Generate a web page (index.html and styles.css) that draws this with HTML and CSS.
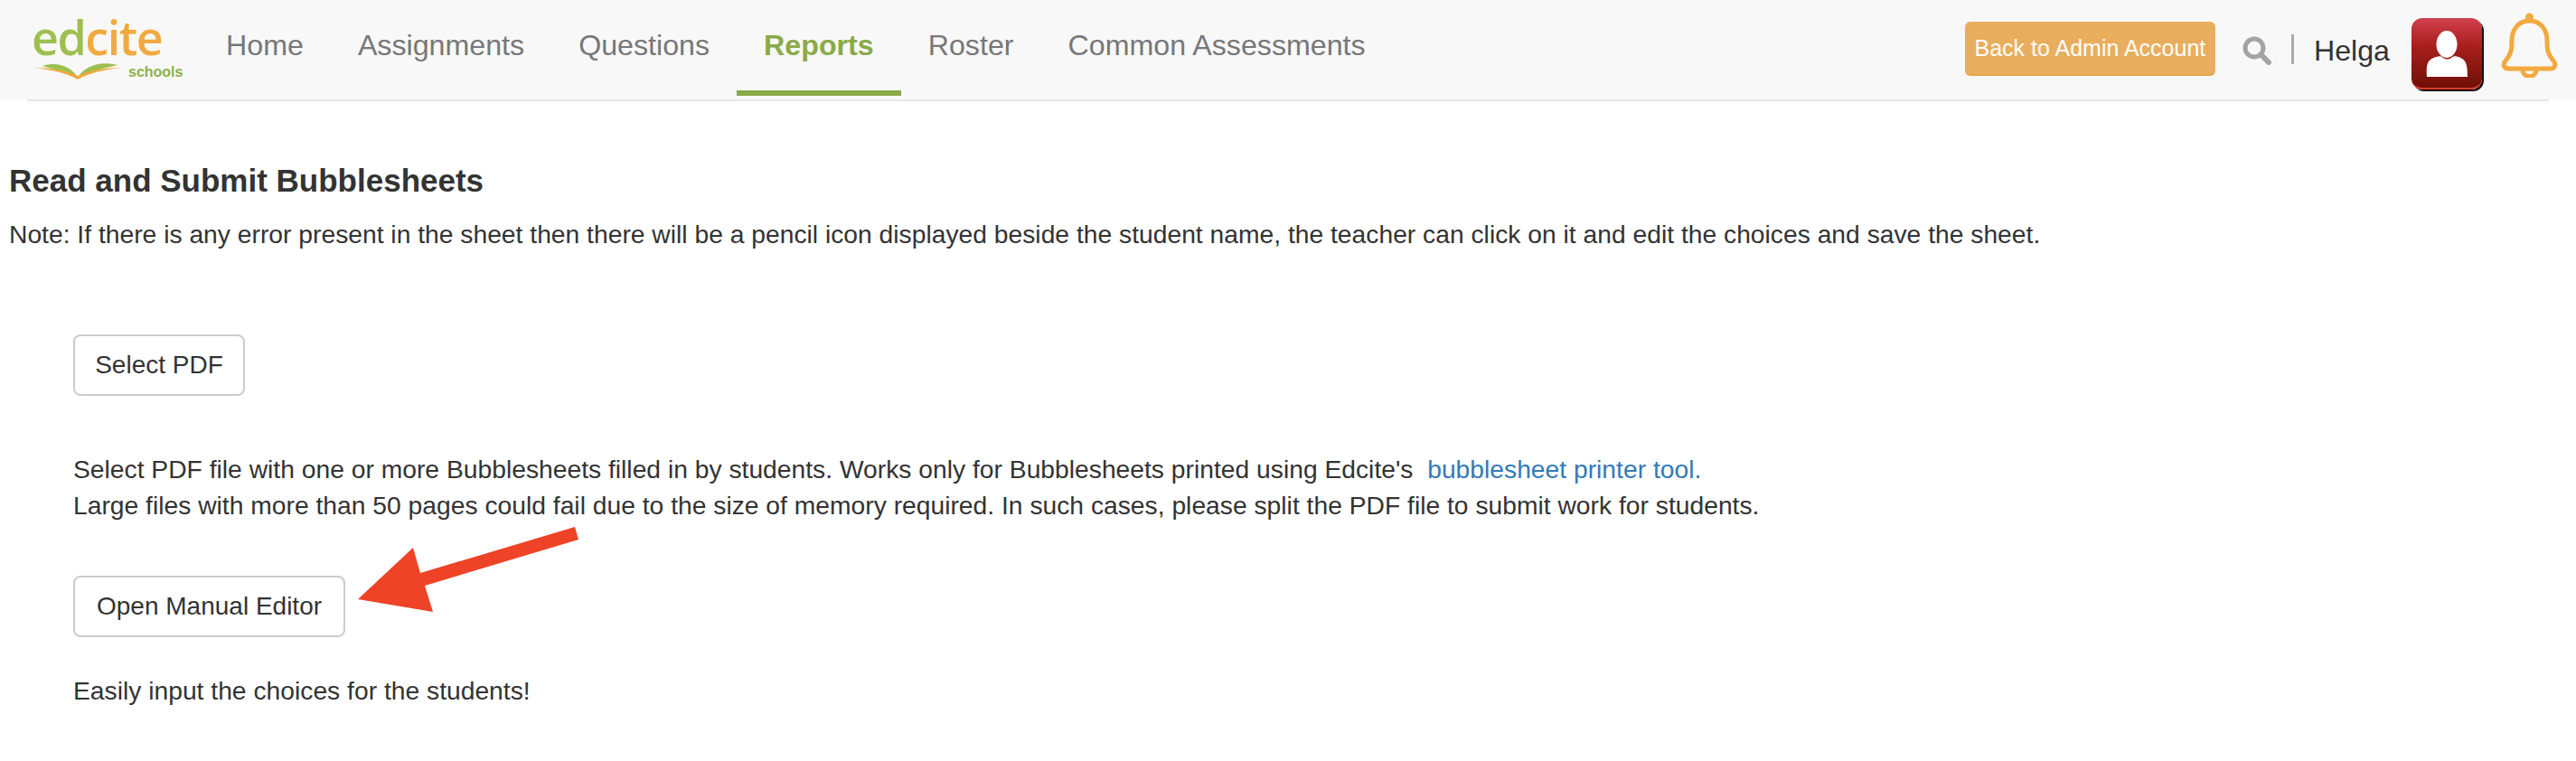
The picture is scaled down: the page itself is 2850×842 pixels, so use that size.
FILE: index.html
```html
<!DOCTYPE html>
<html lang="en">
<head>
    <meta charset="UTF-8">
    <title>Read and Submit Bubblesheets</title>
    <link rel="stylesheet" href="styles.css">
</head>
<body>
    <header class="navbar">
        <a class="logo" href="#">
            <span class="logo-word"><span class="logo-green">ed</span><span class="logo-orange">cite</span></span>
            <svg class="logo-book" viewBox="0 0 98 18" aria-hidden="true">
                <path d="M10 3 C26 -2 40 3 48 14 C38 11 24 7 10 3Z" fill="#9dbf50"/>
                <path d="M93 2 C74 -3 58 3 50 14 C60 10 76 6 93 2Z" fill="#9dbf50"/>
                <path d="M0 5 C18 7 36 10 49 18 C62 10 80 7 98 5 C78 5 62 8 49 14 C36 8 20 5 0 5Z" fill="#f2a93f"/>
            </svg>
            <span class="logo-schools">schools</span>
        </a>
        <nav class="nav-links">
            <a href="#">Home</a>
            <a href="#">Assignments</a>
            <a href="#">Questions</a>
            <a href="#" class="active">Reports</a>
            <a href="#">Roster</a>
            <a href="#">Common Assessments</a>
        </nav>
        <div class="nav-right">
            <a href="#" class="admin-btn">Back to Admin Account</a>
            <svg class="search-icon" viewBox="0 0 32 32" aria-hidden="true">
                <circle cx="13" cy="13" r="10" fill="none" stroke="#a3a3a3" stroke-width="5"/>
                <path d="M21 21 L29 29" stroke="#a3a3a3" stroke-width="6" stroke-linecap="round"/>
            </svg>
            <span class="divider"></span>
            <span class="username">Helga</span>
            <span class="avatar">
                <svg viewBox="0 0 78 79" aria-hidden="true">
                    <ellipse cx="39" cy="29" rx="11.5" ry="15" fill="#fff"/>
                    <path d="M17 65 C16 50 18 46 27 43 C31 42 33 42 35 44 C38 46 41 46 44 44 C46 42 49 42 52 43 C60 46 62 50 62 65 Q62 65 60 65 L19 65 Q17 65 17 65Z" fill="#fff"/>
                </svg>
            </span>
            <svg class="bell" viewBox="0 0 63 72" aria-hidden="true">
                <g fill="none" stroke="#f2a93f" stroke-width="5">
                    <path d="M31.500 9 C19 9 12 19 12 31 C12 41 11 46 6 52 C1 57 3 62 9 62 L54 62 C60 62 62 57 57 52 C52 46 51 41 51 31 C51 19 44 9 31.500 9Z"/>
                    <path d="M24 63 C24 73 39 73 39 63"/>
                </g>
                <circle cx="31.500" cy="5" r="4.500" fill="#f2a93f"/>
            </svg>
        </div>
    </header>

    <main class="content">
        <h1>Read and Submit Bubblesheets</h1>
        <p class="note">Note: If there is any error present in the sheet then there will be a pencil icon displayed beside the student name, the teacher can click on it and edit the choices and save the sheet.</p>

        <div class="section">
            <button class="btn select-btn">Select PDF</button>
            <p class="help">Select PDF file with one or more Bubblesheets filled in by students. Works only for Bubblesheets printed using Edcite's &nbsp;<a href="#">bubblesheet printer tool.</a><br>Large files with more than 50 pages could fail due to the size of memory required. In such cases, please split the PDF file to submit work for students.</p>
            <button class="btn manual-btn">Open Manual Editor</button>
            <p class="easy">Easily input the choices for the students!</p>
        </div>
    </main>

    <svg class="arrow" viewBox="0 0 245 95" aria-hidden="true">
        <path d="M0 80 L61 23 L69 51 L240 0 L244 14 L74 65 L83 94Z" fill="#ee4326"/>
    </svg>
</body>
</html>
```

FILE: styles.css
```css
* {
    box-sizing: border-box;
    margin: 0;
    padding: 0;
}

body {
    font-family: 'Liberation Sans', Arial, sans-serif;
    font-size: 28.25px;
    line-height: 40px;
    color: #333;
    background: white;
    position: relative;
}

a {
    text-decoration: none;
}

.navbar {
    height: 110px;
    background: #f8f8f8;
    display: flex;
    align-items: flex-start;
    position: relative;
}

.navbar::after {
    content: "";
    position: absolute;
    left: 30px;
    right: 30px;
    top: 110px;
    height: 2px;
    background: #e7e7e7;
}

.logo {
    width: 220px;
    height: 110px;
    flex: none;
    position: relative;
}

.logo-word {
    position: absolute;
    left: 35px;
    top: 13px;
    font-family: 'Open Sans', sans-serif;
    font-size: 52px;
    font-weight: 600;
    line-height: 56px;
    letter-spacing: -1.5px;
}

.logo-green {
    color: #9dbf50;
}

.logo-orange {
    color: #f2a93f;
}

.logo-book {
    position: absolute;
    left: 37px;
    top: 70px;
    width: 98px;
    height: 18px;
}

.logo-schools {
    position: absolute;
    left: 142px;
    top: 71px;
    font-size: 16px;
    line-height: 18px;
    font-weight: bold;
    color: #8fb04a;
}

.nav-links {
    display: flex;
    height: 106px;
}

.nav-links a {
    display: block;
    padding: 32px 30px 0;
    font-size: 32.2px;
    line-height: 36px;
    color: #777;
}

.nav-links a.active {
    color: #8aaa47;
    font-weight: bold;
    border-bottom: 6px solid #8aaa47;
}

.nav-right {
    margin-left: auto;
    display: flex;
    align-items: flex-start;
    padding-right: 20px;
}

.admin-btn {
    margin-top: 24px;
    width: 277px;
    height: 60px;
    background: #e8ae5d;
    border-bottom: 2px solid #e4a54d;
    border-radius: 6px;
    color: white;
    font-size: 25px;
    line-height: 58px;
    text-align: center;
}

.search-icon {
    margin: 40px 0 0 30px;
    width: 32px;
    height: 32px;
}

.divider {
    margin: 38px 0 0 22px;
    width: 3px;
    height: 33px;
    background: #aaa;
}

.username {
    margin: 36px 0 0 22px;
    font-size: 32.2px;
    line-height: 40px;
    color: #333;
}

.avatar {
    margin: 20px 0 0 24px;
    width: 78px;
    height: 79px;
    border-radius: 12px;
    background: linear-gradient(#d1404e 0%, #a81f1c 40%, #6f0f08 100%);
    border-bottom: 2px solid #d9352a;
    box-shadow: 2px 2px 0 #111;
}

.avatar svg {
    display: block;
    width: 78px;
    height: 79px;
}

.bell {
    margin: 14px 0 0 21px;
    width: 63px;
    height: 72px;
}

.content {
    padding: 0 10px;
}

h1 {
    margin-top: 67px;
    font-size: 35px;
    line-height: 46px;
    font-weight: bold;
}

.note {
    margin-top: 16px;
}

.section {
    padding-left: 71px;
    margin-top: 91px;
}

.btn {
    display: block;
    padding: 0 24px;
    height: 68px;
    background: white;
    border: 2px solid #ccc;
    border-radius: 8px;
    font-family: inherit;
    font-size: 28px;
    color: #333;
}

.select-btn {
    width: 190px;
    padding: 0;
}

.help {
    margin-top: 61px;
}

.help a {
    color: #337ab7;
}

.manual-btn {
    margin-top: 58px;
}

.easy {
    margin-top: 39px;
}

.arrow {
    position: absolute;
    left: 396px;
    top: 583px;
    width: 245px;
    height: 95px;
}
```
